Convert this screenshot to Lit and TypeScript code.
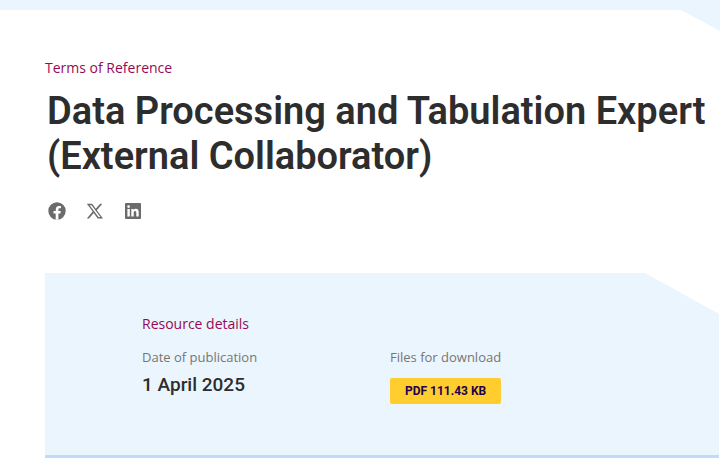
import { LitElement, html, css, svg } from "lit";
import { customElement } from "lit/decorators.js";

const shareLinks = [
  {
    label: "Share on Facebook",
    icon: svg`<path fill-rule="evenodd" d="M9 0.3a8.7 8.7 0 1 1 0 17.4A8.7 8.7 0 0 1 9 .3zM7.7 17.6h2.7v-6.2h2l.4-2.4h-2.4V7.500c0-.8.4-1.300 1.400-1.300h1.100V4.100c-.5-.1-1.100-.2-1.700-.2-2.100 0-3.400 1.200-3.400 3.400V9H5.500v2.400h2.200z"/>`,
  },
  {
    label: "Share on X",
    icon: svg`<path fill-rule="evenodd" d="M.8 1.800h5.300l3.700 5 4.300-5h2.200l-5.500 6.400 6.200 8.300h-5.300l-4-5.400-4.700 5.400H.8l5.900-6.900zM3.600 3.200l8.900 11.900h1.900L5.500 3.200z"/>`,
  },
  {
    label: "Share on LinkedIn",
    icon: svg`<path fill-rule="evenodd" d="M1.800 1h14.400q.8 0 .8.8v14.400q0 .8-.8.8H1.800q-.8 0-.8-.8V1.800q0-.8.8-.8zM3.400 7v7.600h2.400V7zM4.600 3.200a1.400 1.400 0 1 0 0 2.800 1.400 1.400 0 0 0 0-2.800zM7.300 7v7.600h2.400v-3.800c0-1 .3-1.900 1.400-1.900s1.200 1 1.200 2v3.700h2.400v-4.200c0-2-.5-3.600-2.900-3.600-1.100 0-1.900.6-2.200 1.200V7z"/>`,
  },
];

@customElement("app-root")
export class AppRoot extends LitElement {
  static styles = css`
    :host {
      display: block;
      min-height: 100vh;
      padding-top: 10px;
      box-sizing: border-box;
      background: linear-gradient(#ebf5fd 50px, #fff 50px);
      color: #2d2d2d;
      font-family: "Open Sans", "Noto Sans", sans-serif;
    }
    main {
      padding: 48px 0 9px 45px;
      background: #fff;
      clip-path: polygon(0 0, calc(100% - 39px) 0, 100% 21px, 100% 100%, 0 100%);
    }
    .kicker,
    .panel-title {
      margin: 0;
      color: #960a55;
      font-size: 14px;
      font-weight: 400;
      line-height: 20px;
    }
    h1 {
      margin: 11px 0 0 2px;
      font-family: Roboto, sans-serif;
      font-size: 38px;
      font-weight: 600;
      line-height: 45px;
    }
    .share {
      display: flex;
      gap: 20px;
      margin: 23px 0 0 3px;
      padding: 0;
      list-style: none;
    }
    .share a {
      display: block;
      color: #6b6b6b;
    }
    .share svg {
      display: block;
      width: 18px;
      height: 18px;
      fill: currentColor;
    }
    .panel {
      margin: 53px 1px 0 0;
      padding: 41px 24px 51px 97px;
      border-bottom: 3px solid #bedcfa;
      background: #ebf5fd;
      clip-path: polygon(0 0, calc(100% - 74px) 0, 100% 41px, 100% 100%, 0 100%);
    }
    .details {
      display: grid;
      grid-template-columns: 1fr 1fr;
      gap: 24px;
      max-width: 472px;
      margin: 13px 0 0;
    }
    dt {
      color: #757575;
      font-size: 13px;
      line-height: 20px;
    }
    dd {
      margin: 0;
    }
    .date {
      margin-top: 6px;
      font-family: Roboto, sans-serif;
      font-size: 19px;
      font-weight: 500;
      line-height: 24px;
    }
    .download {
      display: inline-block;
      margin-top: 11px;
      padding: 0 15px;
      border-radius: 2px;
      background: #ffcd2d;
      color: #230050;
      font-family: Roboto, sans-serif;
      font-size: 12px;
      font-weight: 700;
      line-height: 26px;
      text-decoration: none;
      vertical-align: top;
    }
  `;

  render() {
    return html`
      <main>
        <p class="kicker">Terms of Reference</p>
        <h1>Data Processing and Tabulation Expert (External Collaborator)</h1>
        <ul class="share">
          ${shareLinks.map(
            (link) => html`<li>
              <a href="#" aria-label=${link.label}>
                <svg viewBox="0 0 18 18" aria-hidden="true">${link.icon}</svg>
              </a>
            </li>`
          )}
        </ul>
        <section class="panel">
          <h2 class="panel-title">Resource details</h2>
          <dl class="details">
            <div>
              <dt>Date of publication</dt>
              <dd class="date">1 April 2025</dd>
            </div>
            <div>
              <dt>Files for download</dt>
              <dd><a class="download" href="#">PDF 111.43 KB</a></dd>
            </div>
          </dl>
        </section>
      </main>
    `;
  }
}
